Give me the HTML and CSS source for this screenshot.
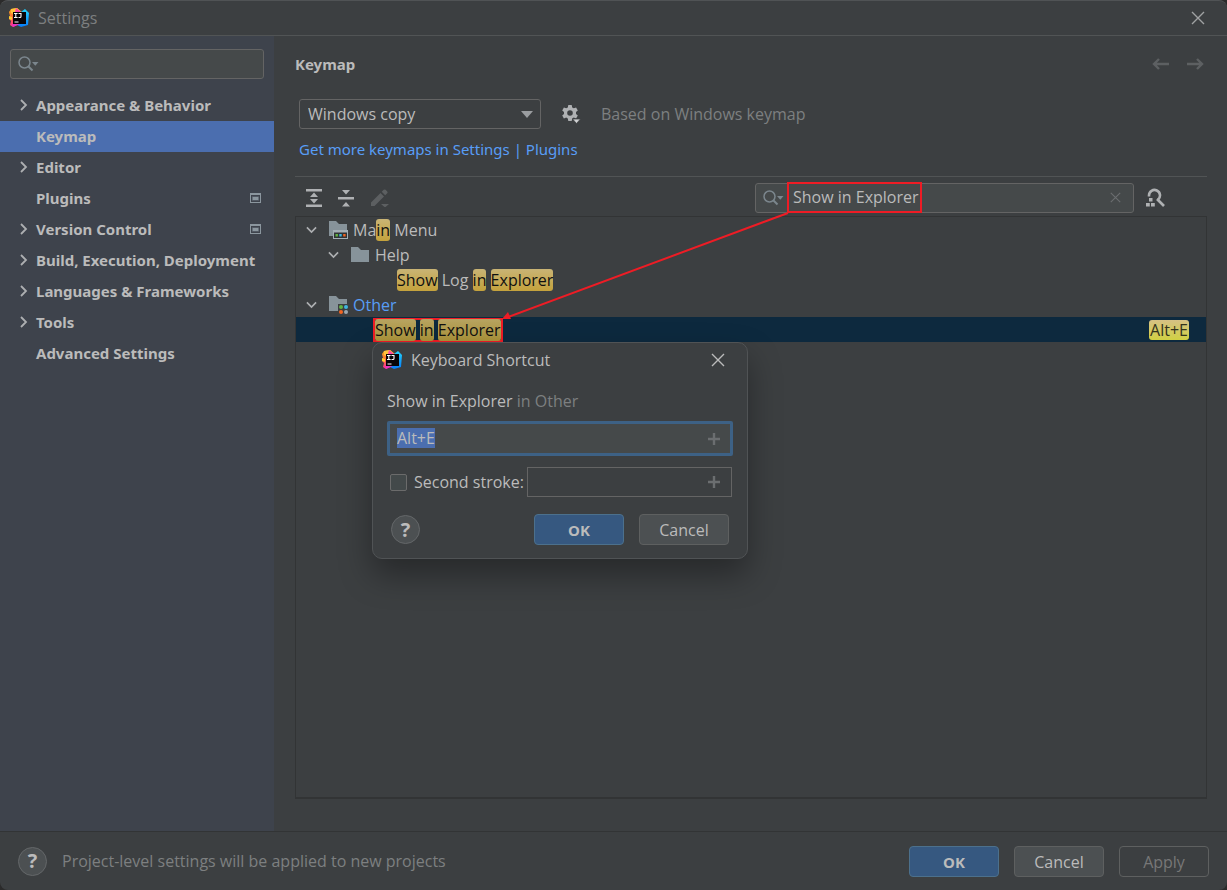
FILE: index.html
```html
<!DOCTYPE html>
<html lang="en">
<head>
<meta charset="utf-8">
<title>Settings</title>
<link rel="stylesheet" href="styles.css">
</head>
<body>
<svg class="defs" aria-hidden="true">
  <defs>
    <linearGradient id="hot" x1="0" y1="0" x2="0" y2="1"><stop offset="0" stop-color="#fdb60d"/><stop offset=".5" stop-color="#ff6a3d"/><stop offset="1" stop-color="#fe2f9a"/></linearGradient>
    <linearGradient id="cool" x1="0" y1="0" x2="0" y2="1"><stop offset="0" stop-color="#21d4fd"/><stop offset="1" stop-color="#087cfa"/></linearGradient>
    <symbol id="logo" viewBox="0 0 20 20">
      <path d="M2 1 8 0l5 4-3 12-6 3-3-2 1-4-2-2 1-3-1-4z" fill="url(#hot)"/>
      <path d="M2 1 8 0 11 3 4 6 2 5z" fill="#ffc33d"/>
      <path d="M7 0 12 4 6 4z" fill="#ff45a4"/>
      <path d="M0 8 3 9v3l-3-1z" fill="#ffd02f"/>
      <path d="M12 4 16 1l4 4-1 12-7 2-4-2z" fill="url(#cool)"/>
      <path d="M3 16h8l-7 3z" fill="#e933c0"/>
      <path d="M4 4h13v12H4z" fill="#080508"/>
      <path d="M5 5.500h3.600M6.800 5.500v4M5 9.500h3.600M9.500 5.500h2.500V8.500q0 1-1 1H9.500M5.500 14h4" fill="none" stroke="#fff" stroke-width="1.100"/>
    </symbol>
    <symbol id="search" viewBox="0 0 22 16">
      <circle cx="6.500" cy="6.500" r="5.500" fill="none" stroke="currentColor" stroke-width="1.500"/>
      <path d="m10.500 10.500 4 4" stroke="currentColor" stroke-width="2"/>
      <path d="M14 6h6.500l-3.200 3.700z" fill="currentColor"/>
    </symbol>
    <symbol id="right" viewBox="0 0 8 12"><path d="m1 1 5 5-5 5" fill="none" stroke="currentColor" stroke-width="1.800"/></symbol>
    <symbol id="down" viewBox="0 0 12 8"><path d="m1 1.200 5 5 5-5" fill="none" stroke="currentColor" stroke-width="1.800"/></symbol>
    <symbol id="project" viewBox="0 0 11 10"><path d="M0 0h11v10H0zM1 2v7h9V2z" fill="#8b969e" fill-rule="evenodd"/><path d="M2 3.500h7v4H2z" fill="#66717a"/><path d="M3 4h5v3H3z" fill="#8b969e"/></symbol>
    <symbol id="close" viewBox="0 0 14 14"><path d="m1 1 12 12M13 1 1 13" stroke="currentColor" stroke-width="1.400"/></symbol>
    <symbol id="plus" viewBox="0 0 14 14"><path d="M7 1v12M1 7h12" stroke="currentColor" stroke-width="2.400"/></symbol>
    <symbol id="folder" viewBox="0 0 18 15"><path d="M0 0h7l3 3h8v12H0z" fill="#87939a"/></symbol>
  </defs>
</svg>
<div class="window">
  <header class="titlebar">
    <svg class="logo"><use href="#logo"/></svg>
    <span class="title">Settings</span>
    <button class="icon-button" aria-label="Close"><svg class="close"><use href="#close"/></svg></button>
  </header>
  <div class="body">
    <aside class="sidebar">
      <div class="field side-search">
        <svg class="magnifier"><use href="#search"/></svg>
        <input type="text" aria-label="Search settings">
      </div>
      <nav class="nav">
        <a href="#"><svg class="arrow"><use href="#right"/></svg><span>Appearance &amp; Behavior</span></a>
        <a href="#" class="current"><span>Keymap</span></a>
        <a href="#"><svg class="arrow"><use href="#right"/></svg><span>Editor</span></a>
        <a href="#"><span>Plugins</span><svg class="project"><use href="#project"/></svg></a>
        <a href="#"><svg class="arrow"><use href="#right"/></svg><span>Version Control</span><svg class="project"><use href="#project"/></svg></a>
        <a href="#"><svg class="arrow"><use href="#right"/></svg><span>Build, Execution, Deployment</span></a>
        <a href="#"><svg class="arrow"><use href="#right"/></svg><span>Languages &amp; Frameworks</span></a>
        <a href="#"><svg class="arrow"><use href="#right"/></svg><span>Tools</span></a>
        <a href="#"><span>Advanced Settings</span></a>
      </nav>
    </aside>
    <main class="content">
      <div class="heading">
        <h1>Keymap</h1>
        <button class="icon-button history" aria-label="Back"><svg viewBox="0 0 18 14"><path d="M17 7H2M7 2 2 7l5 5" fill="none" stroke="currentColor" stroke-width="2.400"/></svg></button>
        <button class="icon-button history" aria-label="Forward"><svg viewBox="0 0 18 14"><path d="M1 7h15M11 2l5 5-5 5" fill="none" stroke="currentColor" stroke-width="2.400"/></svg></button>
      </div>
      <div class="scheme">
        <div class="select">
          <select aria-label="Keymap scheme"><option>Windows copy</option></select>
          <svg class="caret" viewBox="0 0 12 7"><path d="M0 0h12L6 7z" fill="#9a9da0"/></svg>
        </div>
        <button class="icon-button" aria-label="Scheme actions">
          <svg class="gear" viewBox="0 0 20 20"><path d="M7.300 1h3.400l.5 2.400 1.600.9 2.300-.8 1.700 2.900-1.800 1.600v1.900l1.800 1.600-1.700 2.900-2.300-.8-1.600.9-.5 2.400H7.300l-.5-2.400-1.600-.9-2.300.8-1.700-2.900L3 9.900V8L1.200 6.400l1.700-2.900 2.300.8 1.600-.9zM9 6.200A2.800 2.800 0 1 0 9 11.800 2.800 2.800 0 0 0 9 6.200z" fill="#afb1b3" fill-rule="evenodd"/><path d="M11.500 15h8L15.500 19.500z" fill="#d0d2d3" stroke="#3c3f41" stroke-width=".8"/></svg>
        </button>
        <span class="based">Based on Windows keymap</span>
      </div>
      <a class="more" href="#">Get more keymaps in Settings | Plugins</a>
      <div class="toolbar">
        <button class="icon-button" aria-label="Expand all"><svg class="tool" viewBox="0 0 18 18"><path d="M1 0h16v2.400H1zM1 15.600h16V18H1zM9 3.500 13 8H5zM9 14.500 5 10h8z" fill="#afb1b3"/></svg></button>
        <button class="icon-button" aria-label="Collapse all"><svg class="tool" viewBox="0 0 18 18"><path d="M1 8h16v2.400H1zM9 5.500 5 1h8zM9 13l4 4.500H5z" fill="#afb1b3"/></svg></button>
        <button class="icon-button" aria-label="Edit shortcut" disabled><svg class="tool wide" viewBox="-2 0 20 18"><path d="M0 13.500 9.500 4l3.500 3.500L3.500 17H0zM10.700 2.800l2-2q1-.8 1.900 0l1.600 1.600q.8 1 0 1.900l-2 2zM10 15h8l-4 3.500z" fill="#5c5f61"/></svg></button>
        <div class="field find">
          <svg class="magnifier"><use href="#search"/></svg>
          <div class="callout"><input type="text" aria-label="Search actions" value="Show in Explorer"></div>
          <button class="icon-button clear" aria-label="Clear"><svg><use href="#close"/></svg></button>
        </div>
        <button class="icon-button" aria-label="Find by shortcut"><svg class="by-shortcut" viewBox="0 0 20 20"><path d="M4 8.500V7.500a5.500 5.500 0 1 1 9 4.200" fill="none" stroke="#afb1b3" stroke-width="2.600"/><path d="m12 11 7 7" stroke="#afb1b3" stroke-width="2.600"/><path d="M4 10h3.500v3.500H4zM1 15h3.800v3.500H1zM6 15h3.800v3.500H6z" fill="#afb1b3"/></svg></button>
      </div>
      <div class="tree" role="tree">
        <div class="row" role="treeitem"><svg class="twisty"><use href="#down"/></svg>
          <svg class="folder" viewBox="0 0 20 18"><path d="M0 0h7l3 3h8v6H4v6H0z" fill="#87939a"/><path d="M4 9h15v9H4z" fill="#a4afb6"/><path d="M5 11.500h13V17H5z" fill="#303335"/><path d="M6.500 13h2.400v2.400H6.500z" fill="#62b543"/><path d="M10.300 13h2.400v2.400h-2.400z" fill="#40b6e0"/><path d="M14.200 13h2.400v2.400h-2.400z" fill="#f26522"/></svg>
          <span>Ma<mark>in</mark> Menu</span></div>
        <div class="row level-1" role="treeitem"><svg class="twisty"><use href="#down"/></svg>
          <svg class="folder plain"><use href="#folder"/></svg><span>Help</span></div>
        <div class="row level-3" role="treeitem"><span><mark>Show</mark> Log <mark>in</mark> <mark>Explorer</mark></span></div>
        <div class="row" role="treeitem"><svg class="twisty"><use href="#down"/></svg>
          <svg class="folder" viewBox="0 0 20 18"><path d="M0 0h7l3 3h8v5H9v7H0z" fill="#87939a"/><circle cx="12" cy="11" r="2" fill="#62b543"/><circle cx="17" cy="11" r="2" fill="#40b6e0"/><circle cx="12" cy="16" r="2" fill="#f26522"/><circle cx="17" cy="16" r="2" fill="#9aa7b0"/></svg>
          <span class="modified">Other</span></div>
        <div class="row level-2 selected" role="treeitem" aria-selected="true"><span class="callout"><mark>Show</mark> <mark>in</mark> <mark>Explorer</mark></span><span class="shortcut">Alt+E</span></div>
      </div>
    </main>
  </div>
  <footer class="footer">
    <button class="help" aria-label="Help">?</button>
    <span class="note">Project-level settings will be applied to new projects</span>
    <button class="button primary">OK</button>
    <button class="button">Cancel</button>
    <button class="button" disabled>Apply</button>
  </footer>

  <section class="dialog" role="dialog" aria-labelledby="dialog-title">
    <header class="dialog-title">
      <svg class="logo"><use href="#logo"/></svg>
      <span id="dialog-title">Keyboard Shortcut</span>
      <button class="icon-button" aria-label="Close dialog"><svg class="close"><use href="#close"/></svg></button>
    </header>
    <label class="action" for="first">Show in Explorer <span>in Other</span></label>
    <div class="stroke focused">
      <input id="first" type="text" value="Alt+E">
      <button class="icon-button" aria-label="Set shortcut"><svg><use href="#plus"/></svg></button>
    </div>
    <div class="second">
      <input id="second-on" type="checkbox">
      <label for="second-on">Second stroke:</label>
      <div class="stroke">
        <input type="text" aria-label="Second stroke" disabled>
        <button class="icon-button" aria-label="Set second shortcut"><svg><use href="#plus"/></svg></button>
      </div>
    </div>
    <div class="dialog-actions">
      <button class="help" aria-label="Dialog help">?</button>
      <button class="button primary">OK</button>
      <button class="button">Cancel</button>
    </div>
  </section>

  <svg class="pointer" viewBox="0 0 290 110" aria-hidden="true"><path d="M288 2 8 106" stroke="#ee1c25" stroke-width="2"/><path d="m2 108 6-7 3 7z" fill="#ee1c25"/></svg>
</div>
<script src="main.js"></script>
</body>
</html>
```
FILE: styles.css
```css
* { box-sizing: border-box; }

body {
  margin: 0;
  background: #2b2b2b;
  color: #bbbbbb;
  font: 16px/20px "Open Sans", "Noto Sans", sans-serif;
}

button, input, select { font: inherit; color: inherit; }
input { min-width: 0; border: 0; padding: 0; background: none; outline: 0; }
svg { display: block; flex: none; }
a { color: inherit; text-decoration: none; }
.defs { position: absolute; width: 0; height: 0; }

.window {
  position: relative;
  display: flex;
  flex-direction: column;
  min-height: 100vh;
  overflow: hidden;
  border-top: 1px solid #505355;
  border-radius: 8px;
  background: #3c3f41;
}

.icon-button { display: flex; padding: 0; border: 0; background: none; }
.logo { width: 20px; height: 20px; }
.close { width: 14px; height: 14px; }

.titlebar {
  display: flex;
  align-items: center;
  gap: 9px;
  height: 35px;
  padding: 0 22px 0 9px;
  border-bottom: 1px solid #515455;
  color: #7d7f80;
}
.titlebar .icon-button { margin-left: auto; color: #a0a2a3; }

.body { display: flex; flex: 1; }

.sidebar { flex: none; width: 274px; padding-top: 13px; background: #3e434c; }

.field {
  display: flex;
  align-items: center;
  height: 30px;
  border: 1px solid #646464;
  border-radius: 3px;
  background: #45494a;
}
.magnifier { width: 22px; height: 16px; color: #7b868d; }
.side-search { margin: 0 10px 11px; padding-left: 7px; }
.side-search input { flex: 1; }

.nav a {
  display: grid;
  grid-template-columns: 16px 1fr auto;
  align-items: center;
  height: 31px;
  padding: 0 13px 2px 20px;
  font: 700 15px/20px "Noto Sans", sans-serif;
  white-space: nowrap;
}
.nav span { grid-column: 2; }
.nav .current { background: #4b6eaf; }
.arrow { width: 8px; height: 12px; color: #adafb1; }
.project { width: 11px; height: 10px; }

.content { display: flex; flex: 1; flex-direction: column; min-width: 0; padding: 18px 20px 32px 21px; }

.heading { display: flex; align-items: center; gap: 16px; height: 20px; padding-right: 3px; }
.heading h1 { margin: 0 auto 0 0; font: 700 15px/20px "Noto Sans", sans-serif; }
.history { color: #5d6062; }
.history svg { width: 18px; height: 14px; }

.scheme { display: flex; align-items: center; gap: 20px; margin: 25px 0 0 4px; }
.select { position: relative; width: 242px; }
.select select {
  display: block;
  width: 100%;
  height: 30px;
  padding: 0 8px;
  border: 1px solid #646464;
  border-radius: 3px;
  background: #3c3f41;
  appearance: none;
}
.caret { position: absolute; top: 12px; right: 8px; width: 12px; height: 7px; pointer-events: none; }
.gear { width: 20px; height: 20px; }
.based { color: #7d7f80; }

.more {
  align-self: flex-start;
  margin: 10px 0 17px 4px;
  color: #589df6;
  font: 15px/20px "Noto Sans", sans-serif;
}

.toolbar {
  display: flex;
  align-items: center;
  gap: 14px;
  height: 40px;
  padding: 2px 42px 0 10px;
  border-top: 1px solid #515455;
}
.tool { width: 18px; height: 18px; }
.wide { width: 20px; }
.by-shortcut { width: 20px; height: 20px; }
.find { width: 379px; margin-left: auto; padding-left: 7px; }
.find + .icon-button { margin-left: -3px; }
.find .callout { display: flex; height: 31px; margin-left: 2px; width: 135px; }
.find input { width: 100%; padding: 0 0 2px 4px; }
.clear { margin: 0 12px 0 auto; color: #6b6e70; }
.clear svg { width: 11px; height: 11px; }

.callout { border: 2px solid #ee1c25; }

.tree { flex: 1; border: 1px solid #323435; border-bottom-width: 2px; }
.row { display: flex; align-items: center; height: 25px; padding-left: 10px; white-space: pre; }
.level-1 { padding-left: 32px; }
.level-2 { padding-left: 77px; }
.level-3 { padding-left: 101px; }
.twisty { width: 11px; height: 8px; margin-right: 12px; color: #adafb1; }
.folder { width: 20px; height: 18px; margin-right: 4px; }
.plain { width: 18px; height: 15px; margin-right: 6px; }
.modified { color: #589df6; }
.selected { padding-right: 17px; background: #0d293e; }
.row .callout { height: 24px; }
mark, .shortcut {
  border-radius: 3px;
  background: linear-gradient(#c9b475, #c4a23c);
  color: #101010;
}
.selected mark { background: linear-gradient(#b7a461, #ac943a); }
.shortcut { margin-left: auto; padding: 0 1px; background: linear-gradient(#d6c185, #d0d043); color: #33331c; }

.footer {
  display: flex;
  align-items: center;
  gap: 15px;
  height: 59px;
  padding: 0 18px;
  border-top: 1px solid #323435;
}
.note { margin-right: auto; color: #7d7f80; }

.button {
  width: 90px;
  height: 31px;
  padding: 1px 0 0;
  border: 1px solid #5e6060;
  border-radius: 4px;
  background: #4c5052;
}
.button.primary { border-color: #4c708c; background: #365880; font: 700 15px/20px "Noto Sans", sans-serif; }
.button:disabled { background: none; color: #777777; }
.help {
  width: 29px;
  height: 29px;
  padding: 0;
  border: 1px solid #646769;
  border-radius: 50%;
  background: #4c5052;
  font-size: 20px;
  font-weight: 700;
}

.dialog {
  position: absolute;
  top: 341px;
  left: 372px;
  width: 376px;
  padding: 0 14px 13px;
  border: 1px solid #505355;
  border-radius: 10px;
  background: #3c3f41;
  box-shadow: 0 16px 32px rgba(0, 0, 0, 0.35);
}
.dialog-title { display: flex; align-items: center; gap: 9px; height: 34px; margin: 0 8px 0 -5px; }
.dialog-title .icon-button { margin-left: auto; }
.action { display: block; margin: 14px 0 10px; }
.action span { color: #7d7f80; }
.stroke { display: flex; flex: 1; align-items: center; height: 30px; padding: 0 10px; border: 1px solid #646464; }
.stroke input { flex: 1; }
.stroke .icon-button { color: #6b6e70; }
.stroke .icon-button svg { width: 14px; height: 14px; }
.focused { height: 35px; padding: 0 9px 0 7px; border: 3px solid #3d6185; border-radius: 2px; background: #45494a; }
.focused input { padding-bottom: 2px; }
.focused ::selection { background: #4b6eaf; color: #bbbbbb; }
.second { display: flex; align-items: center; margin: 11px 1px 17px 3px; }
.second > input {
  flex: none;
  width: 17px;
  height: 17px;
  margin: 0 7px 0 0;
  border: 1px solid #6b6b6b;
  border-radius: 2px;
  background: #43494a;
  appearance: none;
}
.second label { margin-right: 3px; white-space: nowrap; }
.second .stroke { min-width: 0; }
.dialog-actions { display: flex; align-items: center; gap: 15px; padding: 0 4px 0 4px; }
.dialog-actions .help { margin-right: auto; }

.pointer { position: absolute; top: 210px; left: 500px; width: 290px; height: 110px; pointer-events: none; }
```
FILE: main.js
```js
const first = document.getElementById("first");
first.focus();
first.select();
```
